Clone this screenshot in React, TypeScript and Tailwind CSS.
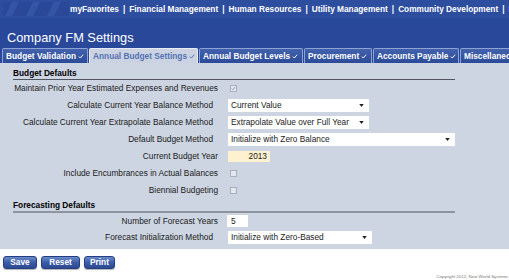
import React from 'react'

const nav = ['myFavorites', 'Financial Management', 'Human Resources', 'Utility Management', 'Community Development', 'Miscellaneous']

const tabs = [
  {label: 'Budget Validation', w: 'w-[86px]'},
  {label: 'Annual Budget Settings', w: 'w-[109px]', active: true},
  {label: 'Annual Budget Levels', w: 'w-[104px]'},
  {label: 'Procurement', w: 'w-[68px]'},
  {label: 'Accounts Payable', w: 'w-[86px]'},
  {label: 'Miscellaneous', w: 'w-[70px]', noCheck: true},
]

const Check = ({className = ''}: {className?: string}) => (
  <svg viewBox="0 0 8 7" className={`inline-block w-[6px] h-[5px] ml-[2px] ${className}`}>
    <path d="M1 3.6 L3 5.6 L7 1" fill="none" stroke="currentColor" strokeWidth="1.4" />
  </svg>
)

const Caret = () => (
  <svg viewBox="0 0 6 4" className="w-[5px] h-[3px]">
    <path d="M0 0 H6 L3 4 Z" fill="#222" />
  </svg>
)

const Select = ({value, w}: {value: string; w: string}) => (
  <div className={`${w} h-[13px] bg-white flex items-center justify-between pl-[3px] pr-[5px]`}>
    <span>{value}</span>
    <Caret />
  </div>
)

const Box = ({checked}: {checked?: boolean}) => (
  <span className="ml-[2px] w-[7px] h-[7px] border border-[#a9b0bd] bg-[#e4e8ee] flex items-center justify-center text-[#8a909a]">
    {checked && (
      <svg viewBox="0 0 6 6" className="w-[5px] h-[5px]">
        <path d="M1 3 L2.5 4.6 L5 1.2" fill="none" stroke="currentColor" strokeWidth="1" />
      </svg>
    )}
  </span>
)

const Row = ({label, children, pad = false, h = 'h-[17px]'}: {label: string; children: React.ReactNode; pad?: boolean; h?: string}) => (
  <div className={`flex items-center ${h}`}>
    <div className={`w-[218px] text-right ${pad ? 'pr-[5px]' : ''}`}>{label}</div>
    <div className="ml-[10px] flex items-center">{children}</div>
  </div>
)

const Btn = ({label, w}: {label: string; w: string}) => (
  <button className={`${w} h-[13px] rounded-[3px] border border-[#233f80] bg-gradient-to-b from-[#6b8bcb] via-[#3c5ca8] to-[#2c4a90] text-white font-bold text-[8.3px] leading-[11px] shadow-[0_1px_1px_rgba(0,0,0,0.3)]`}>
    {label}
  </button>
)

export default function App() {
  return (
    <div className="w-[509px] h-[280px] bg-white overflow-hidden font-['Liberation_Sans',Arial,sans-serif] text-[8.3px] text-black">
      {/* header */}
      <div className="bg-[#29489a]">
        <div className="h-[18px] bg-[#2d4d9e] flex items-center overflow-hidden">
          <svg viewBox="0 0 66 14" className="ml-[3px] w-[66px] h-[14px] shrink-0">
            <rect width="66" height="14" fill="#3454a4" />
            <path d="M0 0 H9 L2 14 H0 Z M16 0 H30 L23 14 H9 Z M37 0 H51 L44 14 H30 Z M58 0 H66 V14 H51 Z" fill="#2a4897" />
          </svg>
          <div className="ml-[1px] flex whitespace-nowrap font-bold text-white leading-none">
            {nav.map((n, i) => (
              <React.Fragment key={n}>
                {i > 0 && <span className="px-[4px]">|</span>}
                <span>{n}</span>
              </React.Fragment>
            ))}
          </div>
        </div>
        <div className="h-[30px] flex items-center pl-[7px] pt-[10px] text-[12.8px] text-white leading-none">
          Company FM Settings
        </div>
        <div className="flex items-end h-[15px] pl-[2px] whitespace-nowrap overflow-hidden">
          {tabs.map((t) => (
            <div
              key={t.label}
              className={`${t.w} shrink-0 h-[15px] mr-[1px] rounded-t-[2px] border border-b-0 pl-[3px] flex items-center font-bold leading-none ${
                t.active
                  ? 'bg-[#cbd3e2] border-[#e6ebf3] text-[#5571b2]'
                  : 'bg-gradient-to-b from-[#4262ae] to-[#2b4a98] border-[#8ea3d3] text-white'
              }`}
            >
              {t.label}
              {!t.noCheck && <Check />}
            </div>
          ))}
        </div>
      </div>

      {/* content */}
      <div className="bg-[#cdd5e2] pt-[5px] pb-[3px]">
        <div className="ml-[13px] w-[442px] h-[11px] leading-[11px] font-bold border-b border-[#50555e] box-content">Budget Defaults</div>
        <div className="text-[#1a1a1a]">
          <Row label="Maintain Prior Year Estimated Expenses and Revenues">
            <Box checked />
          </Row>
          <Row label="Calculate Current Year Balance Method" pad>
            <Select value="Current Value" w="w-[141px]" />
          </Row>
          <Row label="Calculate Current Year Extrapolate Balance Method" pad>
            <Select value="Extrapolate Value over Full Year" w="w-[141px]" />
          </Row>
          <Row label="Default Budget Method" pad>
            <Select value="Initialize with Zero Balance" w="w-[227px]" />
          </Row>
          <Row label="Current Budget Year">
            <div className="w-[42px] h-[11px] bg-[#fdf1cf] text-right pr-[3px] leading-[11px]">2013</div>
          </Row>
          <Row label="Include Encumbrances in Actual Balances">
            <Box />
          </Row>
          <Row label="Biennial Budgeting">
            <Box />
          </Row>
        </div>
        <div className="mt-[1px] ml-[13px] w-[442px] h-[11px] leading-[11px] font-bold border-b-2 border-[#8d949e] box-content">Forecasting Defaults</div>
        <div className="text-[#1a1a1a]">
          <Row label="Number of Forecast Years" h="h-[16px]">
            <div className="-ml-[1px] w-[21px] h-[12px] bg-white pl-[4px] leading-[12px]">5</div>
          </Row>
          <Row label="Forecast Initialization Method" pad>
            <Select value="Initialize with Zero-Based" w="w-[144px]" />
          </Row>
        </div>
      </div>

      {/* buttons */}
      <div className="flex mt-[7px] ml-[3px] gap-[4px]">
        <Btn label="Save" w="w-[34px]" />
        <Btn label="Reset" w="w-[39px]" />
        <Btn label="Print" w="w-[31px]" />
      </div>
      <div className="mt-[5px] pr-[1px] text-right text-[4.4px] leading-[5px] text-[#777]">
        Copyright 2012, New World Systems
      </div>
    </div>
  )
}
